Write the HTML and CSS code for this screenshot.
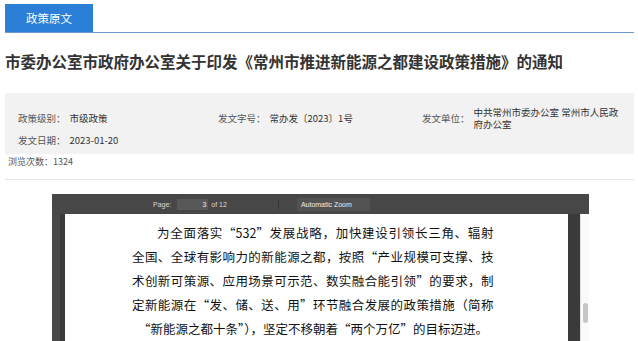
FILE: index.html
```html
<!DOCTYPE html>
<html lang="zh-CN">
<head>
  <meta charset="UTF-8">
  <title>政策原文</title>
  <link rel="stylesheet" href="styles.css">
</head>
<body>
  <div class="tabs">
    <div class="tab">政策原文</div>
  </div>

  <h1 class="title">市委办公室市政府办公室关于印发《常州市推进新能源之都建设政策措施》的通知</h1>

  <div class="info">
    <div class="item"><span class="label">政策级别：</span><span class="value">市级政策</span></div>
    <div class="item"><span class="label">发文字号：</span><span class="value">常办发〔2023〕1号</span></div>
    <div class="item"><span class="label">发文单位：</span><span class="value">中共常州市委办公室 常州市人民政府办公室</span></div>
    <div class="item"><span class="label">发文日期：</span><span class="value">2023-01-20</span></div>
  </div>

  <div class="views">浏览次数：1324</div>

  <div class="viewer">
    <div class="toolbar">
      <span class="tb-text">Page:</span>
      <span class="page-input">3</span>
      <span class="tb-text">of 12</span>
      <span class="tb-sep"></span>
      <span class="zoom-select">Automatic Zoom</span>
    </div>
    <div class="viewer-body">
      <div class="page">
        <div class="line first">为全面落实“532”发展战略，加快建设引领长三角、辐射</div>
        <div class="line">全国、全球有影响力的新能源之都，按照“产业规模可支撑、技</div>
        <div class="line">术创新可策源、应用场景可示范、数实融合能引领”的要求，制</div>
        <div class="line">定新能源在“发、储、送、用”环节融合发展的政策措施（简称</div>
        <div class="line last">“新能源之都十条”），坚定不移朝着“两个万亿”的目标迈进。</div>
      </div>
      <div class="scroll-track">
        <div class="scroll-thumb"></div>
      </div>
    </div>
  </div>
</body>
</html>
```

FILE: styles.css
```css
body {
  margin: 0;
  padding: 4px 4px 0 5px;
  background-color: #fff;
  font-family: "Noto Sans CJK SC", "Liberation Sans", sans-serif;
  color: #333;
  overflow: hidden;
}
.tabs {
  border-bottom: 1px solid #6b9bd6;
  display: flex;
}
.tab {
  width: 88px;
  height: 28px;
  line-height: 28px;
  text-align: center;
  background-color: #2b7fd6;
  color: #fff;
  font-size: 11.5px;
}
.title {
  margin: 18px 0 0;
  font-size: 15.5px;
  line-height: 20px;
  font-weight: bold;
  color: #333;
  white-space: nowrap;
}
.info {
  margin-top: 22px;
  background-color: #f2f2f2;
  padding: 12px 13px 7px;
  display: grid;
  grid-template-columns: 200px 204px 1fr;
  grid-template-rows: 26px 14px;
  row-gap: 2px;
  font-size: 9.5px;
}
.item {
  display: flex;
  align-items: center;
}
.label {
  color: #555;
  white-space: nowrap;
  margin-right: 4px;
}
.value {
  color: #333;
  line-height: 12.5px;
  max-width: 150px;
}
.views {
  padding: 1px 3px 10px;
  line-height: 14px;
  font-size: 9px;
  color: #555;
  border-bottom: 1px solid #e6e6e6;
}
.viewer {
  margin: 14px 0 0 47px;
  width: 537px;
}
.toolbar {
  height: 20px;
  background-color: #474747;
  display: flex;
  align-items: center;
  padding-left: 101px;
  font-family: "Liberation Sans", sans-serif;
  font-size: 7px;
  color: #d8d8d8;
}
.page-input {
  width: 29px;
  height: 11px;
  line-height: 11px;
  margin: 0 3px 0 6px;
  padding-right: 2px;
  background-color: #585858;
  text-align: right;
  color: #eee;
}
.tb-sep {
  width: 1px;
  height: 9px;
  background-color: #333;
  margin: 0 18px 0 51px;
}
.zoom-select {
  width: 69px;
  height: 13px;
  line-height: 13px;
  padding-left: 4px;
  background-color: #525252;
  color: #eee;
}
.viewer-body {
  display: flex;
  height: 130px;
  background-color: #3a3a3a;
  border-left: 8px solid #4a4a4a;
}
.page {
  width: 428px;
  margin-left: 5px;
  padding: 7px 74px 0 67px;
  background-color: #fff;
  color: #111;
  font-size: 12.5px;
  line-height: 24px;
}
.line {
  text-align: justify;
  text-align-last: justify;
  white-space: nowrap;
}
.line.first {
  padding-left: 25px;
}
.line.last {
  text-align-last: left;
  padding-left: 6px;
}
.scroll-track {
  margin-left: 12px;
  width: 10px;
  background-color: #fafafa;
  border-left: 1px solid #e0e0e0;
  position: relative;
}
.scroll-thumb {
  position: absolute;
  left: 2px;
  top: 89px;
  width: 5px;
  height: 20px;
  border-radius: 3px;
  background-color: #c6c6c6;
}
```
